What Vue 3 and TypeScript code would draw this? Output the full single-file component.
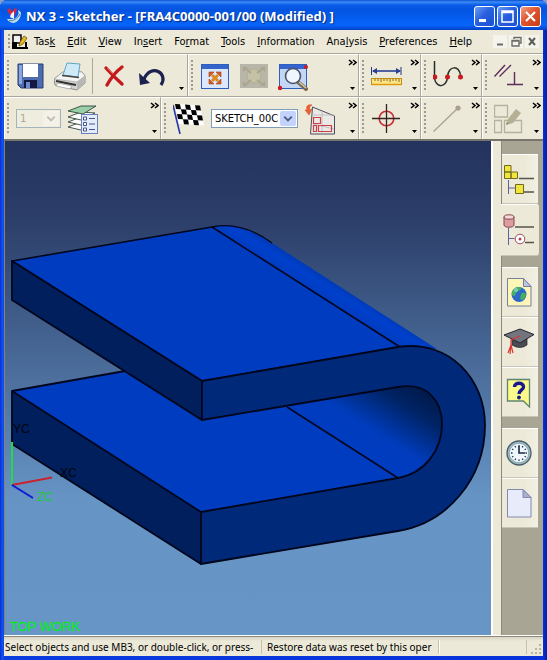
<script setup lang="ts">
import { ref } from 'vue'

interface MenuItem {
  before: string
  key: string
  after: string
}

const menus: MenuItem[] = [
  { before: 'Tas', key: 'k', after: '' },
  { before: '', key: 'E', after: 'dit' },
  { before: '', key: 'V', after: 'iew' },
  { before: 'In', key: 's', after: 'ert' },
  { before: 'Fo', key: 'r', after: 'mat' },
  { before: '', key: 'T', after: 'ools' },
  { before: '', key: 'I', after: 'nformation' },
  { before: 'Ana', key: 'l', after: 'ysis' },
  { before: '', key: 'P', after: 'references' },
  { before: '', key: 'H', after: 'elp' },
]

const layer = ref('1')
const sketch = ref('SKETCH_00C')

const checks: [number, number][] = []
for (let r = 0; r < 4; r++) {
  for (let c = 0; c < 5; c++) {
    if ((r + c) % 2 === 0) checks.push([c, r])
  }
}
const hours = Array.from({ length: 12 }, (_, i) => i * 30)
</script>

<template>
  <div class="window">
    <header class="titlebar">
      <svg class="app-icon" viewBox="0 0 16 16" aria-hidden="true">
        <path d="M1 11 Q3 15 8 15 Q14 13 15 6 Q15 3 12 2 Q14 8 8 11 Z" fill="#b9dcec" />
        <path d="M3 13 Q10 13 14 6" fill="none" stroke="#4a7f9f" stroke-width="1" />
        <path d="M1 2 L4 0 L6 4 L9 0 L11 1 L8 9 L4 7 Z" fill="#d7263d" />
        <path d="M5 6 L8 3 L8 11 L4 9 Z" fill="#f4f4f8" />
      </svg>
      <h1>NX 3 - Sketcher - [FRA4C0000-001/00 (Modified) ]</h1>
      <div class="captions">
        <button type="button" class="caption" aria-label="Minimize">
          <svg viewBox="0 0 19 19"><rect x="4" y="12" width="7" height="3" fill="#fff" /></svg>
        </button>
        <button type="button" class="caption" aria-label="Maximize">
          <svg viewBox="0 0 19 19"><path d="M4 4h11v11H4z M4 5.5h11" fill="none" stroke="#fff" stroke-width="1.5" /></svg>
        </button>
        <button type="button" class="caption close" aria-label="Close">
          <svg viewBox="0 0 19 19"><path d="M5 5l9 9M14 5l-9 9" stroke="#fff" stroke-width="2.2" /></svg>
        </button>
      </div>
    </header>

    <div class="client">
      <nav class="menubar">
        <span class="grip" />
        <svg class="doc-icon" viewBox="0 0 16 16" aria-hidden="true">
          <rect x="1" y="1" width="8" height="8" fill="#eee" stroke="#000" stroke-width="1.5" />
          <path d="M0 8h5v7H0z M5 13h11v2H5z M13 8h2v6h-2z" fill="#000" />
          <path d="M7 12 L8 8 L12 2 L15 4 L11 10 Z" fill="#e8b820" stroke="#5d4300" stroke-width=".7" />
        </svg>
        <ul>
          <li v-for="m in menus" :key="m.before + m.key + m.after">
            <button type="button">{{ m.before }}<u>{{ m.key }}</u>{{ m.after }}</button>
          </li>
        </ul>
        <div class="mdi">
          <button type="button" aria-label="Minimize document"><svg viewBox="0 0 14 13"><path d="M4 9.5h6" stroke="#6d6c66" stroke-width="2" /></svg></button>
          <button type="button" aria-label="Restore document"><svg viewBox="0 0 14 13"><path d="M5 4V2.5h7V8h-2M3 5.5h7V11H3z M3 6h7" fill="none" stroke="#6d6c66" stroke-width="1.4" /></svg></button>
          <button type="button" aria-label="Close document"><svg viewBox="0 0 14 13"><path d="M4 3l6 7M10 3l-6 7" stroke="#5d5c56" stroke-width="2" /></svg></button>
        </div>
      </nav>

      <div class="toolrow first">
        <section class="group">
          <span class="grip" />
          <button type="button" class="tool" aria-label="Save">
            <svg viewBox="0 0 32 32">
              <path d="M2 4h25v24H5l-3-3z" fill="#4c6cae" stroke="#2a3c74" />
              <path d="M3 5h3v19H3z" fill="#8aa6dc" />
              <rect x="7" y="4" width="15" height="13" fill="#fff" />
              <rect x="8" y="20" width="13" height="8" fill="#15183f" />
              <rect x="10" y="22" width="4" height="6" fill="#6f8cd0" />
            </svg>
          </button>
          <button type="button" class="tool" aria-label="Print">
            <svg viewBox="0 0 32 32">
              <path d="M0 19 L9 12 H28 L31 16 V23 L23 30 L1 25z" fill="#d4d4d0" stroke="#8a8a88" />
              <path d="M0 19 L9 12 H28 L31 16 L23 22z" fill="#f4f4f2" stroke="#999" stroke-width=".6" />
              <path d="M9 15 L13 3 L26 4 L24 17z" fill="#cfeaf6" stroke="#5fa6c6" />
              <path d="M8 15.5 L25 17.5" stroke="#444" stroke-width="1.5" />
              <path d="M2 21 L22 25" stroke="#333" stroke-width="2" />
              <path d="M4 23 L18 26 L16 29 L2 26z" fill="#fff" stroke="#888" stroke-width=".6" />
              <path d="M23 22 L31 16 V23 L23 30z" fill="#b8b8b6" />
            </svg>
          </button>
          <span class="divider" />
          <button type="button" class="tool" aria-label="Delete">
            <svg viewBox="0 0 32 32">
              <path d="M7 8 Q14 16 23 24 M23 7 Q14 14 8 25" fill="none" stroke="#c41a1e" stroke-width="3.4" stroke-linecap="round" />
              <path d="M8 8 L14 14" stroke="#e8605c" stroke-width="1" />
            </svg>
          </button>
          <button type="button" class="tool" aria-label="Undo">
            <svg viewBox="0 0 32 32">
              <path d="M24 25 C32 13 14 3 7 19" fill="none" stroke="#1d2150" stroke-width="3.2" />
              <path d="M2 13 L3 25 L13 23z" fill="#1d2150" />
            </svg>
          </button>
          <button type="button" class="more" aria-label="More standard tools"><svg viewBox="0 0 9 34"><path d="M2 28h5l-2.500 3z" fill="#000" /></svg></button>
        </section>

        <section class="group">
          <span class="grip" />
          <button type="button" class="tool" aria-label="Fit">
            <svg viewBox="0 0 32 32">
              <rect x="1.500" y="4.500" width="27" height="24" fill="#dbe7fa" stroke="#2d5fc0" />
              <rect x="2" y="5" width="26" height="4" fill="#3564cc" />
              <path d="M12 15l6 6M18 15l-6 6" stroke="#dc8a20" stroke-width="3" />
              <path d="M9 12h5l-5 5z M21 12v5l-5-5z M9 24v-5l5 5z M21 24h-5l5-5z" fill="#d85c22" stroke="#a53c10" stroke-width=".6" />
            </svg>
          </button>
          <button type="button" class="tool" disabled aria-label="Fit selection">
            <svg viewBox="0 0 32 32">
              <rect x="2" y="4" width="28" height="24" fill="#b8b6a8" />
              <path d="M5 7h5l-5 5z M27 7v5l-5-5z M5 26v-5l5 5z M27 26h-5l5-5z" fill="#aaa58c" />
              <circle cx="16" cy="16" r="7" fill="#c5c1a6" stroke="#b2ad96" />
              <path d="M8 9l5 4M24 9l-5 4M8 24l5-4M24 24l-5-4" stroke="#aca688" stroke-width="2" />
            </svg>
          </button>
          <button type="button" class="tool" aria-label="Zoom">
            <svg viewBox="0 0 32 32">
              <rect x="3.500" y="4.500" width="27" height="24" fill="#c3d6f6" stroke="#2d5fc0" />
              <rect x="4" y="5" width="26" height="4" fill="#3564cc" />
              <path d="M22 22 L30 29" stroke="#7a6a50" stroke-width="4" stroke-linecap="round" />
              <path d="M23 22 L30 28" stroke="#d8cba8" stroke-width="1.500" />
              <circle cx="17" cy="16" r="7.500" fill="#eef6ff" stroke="#4a5264" stroke-width="1.600" />
              <circle cx="30" cy="7" r="2" fill="#d01820" /><circle cx="4" cy="28" r="2.200" fill="#d01820" />
            </svg>
          </button>
          <button type="button" class="more" aria-label="More view tools"><svg viewBox="0 0 9 34"><path d="M1 1l3 2.500-3 2.500M5 1l3 2.500-3 2.500" class="chev" /><path d="M2 28h5l-2.500 3z" /></svg></button>
        </section>

        <section class="group">
          <span class="grip" />
          <button type="button" class="tool" aria-label="Measure">
            <svg viewBox="0 0 32 32">
              <path d="M.5 7v8M30 7v8" stroke="#27357c" />
              <path d="M2 11h27" stroke="#2c3f94" stroke-width="1.600" /><path d="M1 11l5-3v6zM30 11l-5-3v6z" fill="#2c3f94" />
              <rect x=".5" y="18.500" width="30" height="6" fill="#fbe48a" stroke="#c28c10" />
              <path d="M1 24.500h29" stroke="#e29c08" stroke-width="1.500" />
              <path d="M4 19v2M7 19v2M10 19v3M13 19v2M16 19v2M19 19v3M22 19v2M25 19v2M28 19v3" stroke="#8a661a" />
            </svg>
          </button>
          <button type="button" class="more" aria-label="More measure tools"><svg viewBox="0 0 9 34"><path d="M1 1l3 2.500-3 2.500M5 1l3 2.500-3 2.500" class="chev" /><path d="M2 28h5l-2.500 3z" /></svg></button>
        </section>

        <section class="group">
          <span class="grip" />
          <button type="button" class="tool" aria-label="Profile">
            <svg viewBox="0 0 32 32">
              <path d="M1.500 1 V17 C2 29 14 28 14.500 17 C15 5 27 5 27.500 16" fill="none" stroke="#26302a" stroke-width="1.500" />
              <circle cx="1.800" cy="17" r="2.500" fill="#c81c20" /><circle cx="14.500" cy="17" r="2.500" fill="#c81c20" /><circle cx="27.500" cy="17" r="2.500" fill="#c81c20" />
            </svg>
          </button>
          <button type="button" class="more" aria-label="More curve tools"><svg viewBox="0 0 9 34"><path d="M1 1l3 2.500-3 2.500M5 1l3 2.500-3 2.500" class="chev" /><path d="M2 28h5l-2.500 3z" /></svg></button>
        </section>

        <section class="group">
          <span class="grip" />
          <button type="button" class="tool" aria-label="Constraints">
            <svg viewBox="0 0 32 32">
              <path d="M.5 16.500 L11 5 M5.500 16.500 L17 5 M13 24.500H29 M20.500 12V24" fill="none" stroke="#5d2c5a" stroke-width="1.400" />
            </svg>
          </button>
          <button type="button" class="more" aria-label="More constraint tools"><svg viewBox="0 0 9 34"><path d="M1 1l3 2.500-3 2.500M5 1l3 2.500-3 2.500" class="chev" /><path d="M2 28h5l-2.500 3z" /></svg></button>
        </section>
      </div>

      <div class="toolrow second">
        <section class="group">
          <span class="grip" />
          <div class="combo small">
            <select v-model="layer" disabled aria-label="Work layer"><option>1</option></select>
            <svg viewBox="0 0 16 16" aria-hidden="true"><path d="M4 6l4 4 4-4" fill="none" stroke="#c0bdb0" stroke-width="2" /></svg>
          </div>
          <button type="button" class="tool" aria-label="Layer settings">
            <svg viewBox="0 0 32 32">
              <g stroke="#33443c" stroke-width=".9">
                <path d="M1 24 L14 19 L28 20 L14 27z" fill="#fff" />
                <path d="M1 19 L14 14 L28 15 L14 22z" fill="#fff" />
                <path d="M1 14 L14 9 L28 10 L14 17z" fill="#fff" />
                <path d="M1 8 L14 3 L29 3 L16 11z" fill="#9ad0a8" />
              </g>
              <rect x="14.500" y="11.500" width="16" height="19" fill="#e4ecfc" stroke="#6a80b8" />
              <path d="M16.500 14h3v3h-3zM16.500 19.500h3v3h-3zM16.500 25h3v3h-3z" fill="#fff" stroke="#44548c" />
              <path d="M22 15.500h6M22 21h6M22 26.500h6" stroke="#44548c" />
            </svg>
          </button>
          <button type="button" class="more" aria-label="More layer tools"><svg viewBox="0 0 9 34"><path d="M1 1l3 2.500-3 2.500M5 1l3 2.500-3 2.500" class="chev" /><path d="M2 28h5l-2.500 3z" /></svg></button>
        </section>

        <section class="group">
          <span class="grip" />
          <button type="button" class="tool" aria-label="Finish sketch">
            <svg viewBox="0 0 32 32">
              <path d="M0 2 L7 31" stroke="#2838a8" stroke-width="1.600" />
              <g transform="matrix(5 0.3 1 5 2 1)">
                <rect width="5" height="4" fill="#fff" />
                <rect v-for="([c, r], i) in checks" :key="i" :x="c" :y="r" width="1" height="1" fill="#000" />
              </g>
            </svg>
          </button>
          <div class="combo">
            <select v-model="sketch" aria-label="Sketch name"><option>SKETCH_00C</option></select>
            <svg class="live" viewBox="0 0 16 16" aria-hidden="true"><path d="M4 6l4 4 4-4" fill="none" stroke="#4d6185" stroke-width="2.200" /></svg>
          </div>
          <button type="button" class="tool" aria-label="Orient view to sketch">
            <svg viewBox="0 0 32 32">
              <path d="M8.500 4 L30.500 13 V31 H6.500z" fill="#ebe9e4" stroke="#4a4c5c" />
              <path d="M8 12h22M18 8v23M9 21 L30 26" stroke="#b8b4bc" stroke-width=".8" />
              <path d="M9.500 14.500h7v6h-7zM9.500 22.500h3v6h-3zM14.500 22.500h13v6h-13z" fill="none" stroke="#cc4048" stroke-width="1.200" />
              <path d="M8 2 C3 1 2 4 3 7 L1 7 L5 12 L8 6 L6 7 C5 4 6 3 8 2z" fill="#ee6030" stroke="#c84420" stroke-width=".5" />
            </svg>
          </button>
          <button type="button" class="more" aria-label="More sketcher tools"><svg viewBox="0 0 9 34"><path d="M1 1l3 2.500-3 2.500M5 1l3 2.500-3 2.500" class="chev" /><path d="M2 28h5l-2.500 3z" /></svg></button>
        </section>

        <section class="group">
          <span class="grip" />
          <button type="button" class="tool" aria-label="Point">
            <svg viewBox="0 0 32 32">
              <circle cx="15.500" cy="15.500" r="7.300" fill="none" stroke="#c83038" stroke-width="1.600" />
              <path d="M1 15.500h28M15.500 1v29" stroke="#33241f" stroke-width="1.300" />
            </svg>
          </button>
          <button type="button" class="more" aria-label="More point tools"><svg viewBox="0 0 9 34"><path d="M1 1l3 2.500-3 2.500M5 1l3 2.500-3 2.500" class="chev" /><path d="M2 28h5l-2.500 3z" /></svg></button>
        </section>

        <section class="group">
          <span class="grip" />
          <button type="button" class="tool" disabled aria-label="Edit curve">
            <svg viewBox="0 0 32 32"><path d="M.5 28.500 L25 5" stroke="#a9a394" stroke-width="1.300" /><circle cx="25" cy="5" r="2.600" fill="#a9a08e" /></svg>
          </button>
          <button type="button" class="more" aria-label="More edit tools"><svg viewBox="0 0 9 34"><path d="M1 1l3 2.500-3 2.500M5 1l3 2.500-3 2.500" class="chev" /><path d="M2 28h5l-2.500 3z" /></svg></button>
        </section>

        <section class="group">
          <span class="grip" />
          <button type="button" class="tool" disabled aria-label="Edit sketch">
            <svg viewBox="0 0 32 32">
              <path d="M.5 2.500h13v11.500H.5zM.5 17.500h7v12H.5zM10.500 17.500h17v12h-17z" fill="none" stroke="#b4b1a0" stroke-width="1.300" />
              <path d="M12 22 L14 16 L22 6 L27 10 L19 20z" fill="#b5af94" />
              <path d="M12 22l1-3 2 1.500z" fill="#8f8970" />
            </svg>
          </button>
          <button type="button" class="more" aria-label="More sketch tools"><svg viewBox="0 0 9 34"><path d="M1 1l3 2.500-3 2.500M5 1l3 2.500-3 2.500" class="chev" /><path d="M2 28h5l-2.500 3z" /></svg></button>
        </section>
      </div>

      <main class="work">
        <div class="viewport">
          <svg class="model" viewBox="5 141 486 494" preserveAspectRatio="xMinYMin meet" role="img" aria-label="Bent plate model">
            <defs>
              <linearGradient id="outerBend" gradientUnits="userSpaceOnUse" x1="306" y1="287" x2="316" y2="271">
                <stop offset="0" stop-color="#003cc0" /><stop offset=".6" stop-color="#0040cc" /><stop offset="1" stop-color="#003ab8" />
              </linearGradient>
              <linearGradient id="innerBend" gradientUnits="userSpaceOnUse" x1="343" y1="442" x2="390" y2="369">
                <stop offset="0" stop-color="#003cc0" /><stop offset=".3" stop-color="#003cbc" /><stop offset=".75" stop-color="#002364" /><stop offset="1" stop-color="#001a4c" />
              </linearGradient>
            </defs>
            <g stroke="#00061c" stroke-width="1.800" stroke-linejoin="round">
              <path d="M12 391 L125 371 L290 405 L398 478 L201 512z" fill="#003cc0" stroke="none" />
              <path d="M12 391 L125 371" />
              <path d="M12 391 L201 512 V564 L12 444z" fill="#001f5c" />
              <path d="M286 406 L398 386 Q440 384 443 425 Q440 472 398 478z" fill="url(#innerBend)" stroke="none" />
              <path d="M287 407 L398 478" fill="none" stroke-width="1.500" />
              <path d="M212 227 C236 222 257 232 272 243 L437 349 L398 347z" fill="url(#outerBend)" stroke="none" />
              <path d="M12 261 L212 227 L400 347 L202 381z" fill="#003cc0" stroke-width="1.600" />
              <path d="M212 227 C236 222 257 232 272 243" fill="none" stroke-width="1.300" />
              <path d="M12 261 L202 381 V420 L12 300z" fill="#001f5c" />
              <path d="M202 381 L398 347 C450 339 485 380 485 425 C485 479 447 523 398 531 L201 564 V512 L398 478 C425 473 442 450 442 424 C442 402 428 382 398 387 L202 420z" fill="#00297a" />
            </g>
            <g stroke-width="2" fill="none">
              <path d="M12 442V485" stroke="#28d848" /><path d="M12 485L52 477.500" stroke="#c82430" /><path d="M12 485L33 498" stroke="#1018d8" />
            </g>
            <g class="axis">
              <text x="13" y="433" fill="#02040e">YC</text>
              <text x="60" y="477" fill="#02040e">XC</text>
              <text x="37" y="501" fill="#20c83c">ZC</text>
              <text x="10" y="631" class="view-name">TOP WORK</text>
            </g>
          </svg>
        </div>

        <aside class="rail" aria-label="Resource bar">
          <div class="tabs">
            <button type="button" aria-label="Assembly navigator">
              <svg viewBox="0 0 32 40">
                <path d="M1.500 6.500h6.500v6.500H1.500zM1.500 13h6.500v6.500H1.500zM8 13h6.500v6.500H8zM12.500 25.500h8v9h-8z" fill="#f2e63c" stroke="#6f6a20" />
                <path d="M16 19.500h15M21 33h10" stroke="#55564e" stroke-width="1.400" /><path d="M5.500 21v14M5.500 29h7" stroke="#5b62a0" fill="none" />
              </svg>
            </button>
            <button type="button" class="active" aria-label="Part navigator">
              <svg viewBox="0 0 32 40">
                <path d="M1 7v8c0 3 10 3 10 0V7z" fill="#dc9ca0" stroke="#84444c" /><ellipse cx="6" cy="7" rx="5" ry="2.200" fill="#f6d8d8" stroke="#84444c" />
                <path d="M12 17h19M22 32.500h9" stroke="#55564e" stroke-width="1.400" /><path d="M5.500 18v17M5.500 28.500h6" stroke="#5b62a0" fill="none" />
                <circle cx="17" cy="29" r="4.800" fill="#fff" stroke="#985058" /><circle cx="17" cy="29" r="1.500" fill="#b04048" />
              </svg>
            </button>
          </div>
          <div class="tabs">
            <button type="button" aria-label="Internet explorer">
              <svg viewBox="0 0 32 40">
                <path d="M4.500 6.500h16l7.500 8v19.500H4.500z" fill="#fdf6b8" stroke="#7780a0" /><path d="M20.500 6.500v8H28z" fill="#b8c6e0" stroke="#7780a0" />
                <circle cx="16" cy="22.500" r="7.500" fill="#2c68c8" /><path d="M10 18c3-4 7-3 8-2s-2 3-4 4-1 4-3 4-3-3-1-6zM19 21c3-1 4 0 4 3-1 3-4 4-5 4s-1-5 1-7z" fill="#48b060" /><circle cx="13" cy="18" r="2" fill="#a8dcf4" opacity=".6" />
              </svg>
            </button>
            <button type="button" aria-label="Training">
              <svg viewBox="0 0 32 40">
                <path d="M9 16v7q8 5 15 0v-8z" fill="#4a4a54" stroke="#222" stroke-width=".7" />
                <path d="M1 13 L17 7 L31 12.500 L17 21z" fill="#74747e" stroke="#24242c" /><path d="M17 14 L8 18 V25" fill="none" stroke="#d83830" stroke-width="1.200" />
                <path d="M8 23l-3 8M8 23l-1 9M8 23l2 8" stroke="#dc3830" stroke-width="1.200" />
              </svg>
            </button>
            <button type="button" aria-label="Help">
              <svg viewBox="0 0 32 40">
                <path d="M4.500 7.500h22v21.500l0 6-6-6h-16z" fill="#fbf98c" stroke="#5f8470" stroke-width="1.300" />
                <path d="M11.500 15c0-5 9-5 9 0 0 3-4.500 3-4.500 7" fill="none" stroke="#18188c" stroke-width="3.400" /><circle cx="16" cy="25.500" r="1.900" fill="#18188c" />
              </svg>
            </button>
          </div>
          <div class="tabs">
            <button type="button" aria-label="History">
              <svg viewBox="0 0 32 40">
                <circle cx="16" cy="20" r="12" fill="#9dbac2" stroke="#4a5f68" stroke-width="1.300" /><circle cx="16" cy="20" r="9.700" fill="#f0f8fc" stroke="#7b969e" stroke-width=".7" />
                <path v-for="h in hours" :key="h" d="M16 12v1.500" stroke="#1c2c54" stroke-width="1.300" :transform="`rotate(${h} 16 20)`" />
                <path d="M16 13v7h6" fill="none" stroke="#182848" stroke-width="1.600" />
              </svg>
            </button>
            <button type="button" aria-label="Roles">
              <svg viewBox="0 0 32 40">
                <path d="M4.500 6.500h15.500l8 8V34H4.500z" fill="#e8ebfa" stroke="#8288b0" /><path d="M20 6.500l0 8h8z" fill="#a8b0cc" stroke="#8288b0" />
              </svg>
            </button>
          </div>
        </aside>
      </main>

      <footer class="status">
        <p>Select objects and use MB3, or double-click, or press-</p>
        <p>Restore data was reset by this oper</p>
        <span class="pane" />
        <svg class="sizer" viewBox="0 0 12 12" aria-hidden="true"><path d="M9 1h2v2H9zM5 5h2v2H5zM9 5h2v2H9zM1 9h2v2H1zM5 9h2v2H5zM9 9h2v2H9z" fill="#b8b4a2" /></svg>
      </footer>
    </div>
  </div>
</template>

<style>
body {
  margin: 0;
  background: #8aa0cc;
}
</style>

<style scoped>
.window {
  box-sizing: border-box;
  min-height: 100vh;
  display: flex;
  flex-direction: column;
  padding: 0 4px 4px;
  background: linear-gradient(90deg, #0830d8, #1658f0 3px, #0a3ce0 4px, #0831d9 calc(100% - 4px), #0020a8);
  border-radius: 7px 7px 0 0;
  font: 11px/14px "DejaVu Sans Condensed", "Liberation Sans", sans-serif;
  color: #000;
  overflow: hidden;
}
button {
  font: inherit;
  color: inherit;
  border: 0;
  padding: 0;
  background: none;
}
svg {
  display: block;
}
.titlebar {
  box-sizing: border-box;
  height: 30px;
  margin: 0 -4px;
  padding: 2px 6px 0;
  display: flex;
  align-items: center;
  gap: 4px;
  background: linear-gradient(#0a50d0 0, #3c8cf8 2px, #0a5ce8 5px, #0454e0 10px, #0560f4 21px, #0664fc 25px, #0448d0 29px, #0340c0 30px);
}
.app-icon {
  width: 16px;
  height: 16px;
}
h1 {
  flex: 1;
  margin: 0;
  min-width: 0;
  overflow: hidden;
  white-space: nowrap;
  font: bold 13px/20px "Noto Sans", "Open Sans", sans-serif;
  color: #fff;
  text-shadow: 1px 1px 1px #0b2a80;
}
.captions {
  display: flex;
  gap: 2px;
}
.caption {
  box-sizing: border-box;
  width: 21px;
  height: 21px;
  border: 1px solid #fff;
  border-radius: 3px;
  background: linear-gradient(135deg, #6c9cf4, #2860e0 45%, #1c50d0);
}
.caption.close {
  background: linear-gradient(135deg, #f0a088, #e05430 45%, #c83c18);
}
.client {
  flex: 1;
  display: flex;
  flex-direction: column;
  background: #ece9d8;
}
.menubar {
  box-sizing: border-box;
  height: 24px;
  display: flex;
  align-items: center;
  padding: 0 4px;
  border-bottom: 1px solid #aca899;
}
.grip {
  flex: none;
  width: 3px;
  height: 32px;
  background: radial-gradient(circle at 1px 1px, #9d9a8c 1px, transparent 1px) 0 0 / 3px 4px;
}
.menubar .grip {
  height: 16px;
}
.doc-icon {
  width: 16px;
  height: 16px;
  margin: 0 6px 0 1px;
}
.menubar ul {
  flex: 1;
  display: flex;
  gap: 12px;
  margin: 0;
  padding: 0;
  list-style: none;
}
.menubar li {
  display: flex;
}
.mdi {
  display: flex;
  gap: 2px;
}
.mdi button {
  width: 14px;
  height: 13px;
  background: #f4f3ec;
}
.toolrow {
  display: grid;
  height: 42px;
  border-bottom: 1px solid #aca899;
}
.first {
  grid-template-columns: 184px 171px 62px 61px 1fr;
}
.second {
  grid-template-columns: 157px 198px 62px 61px 1fr;
  border-bottom: 2px solid #77756c;
}
.group {
  display: flex;
  align-items: center;
  gap: 6px;
  padding: 0 1px 0 3px;
  border-right: 1px solid #aca899;
  border-top: 1px solid #fff;
  box-shadow: inset 1px 0 #fff;
  min-width: 0;
}
.group:last-child {
  border-right: 0;
  padding-right: 5px;
}
.tool {
  flex: none;
}
.tool svg {
  width: 32px;
  height: 32px;
}
.divider {
  width: 1px;
  height: 36px;
  background: #aca899;
}
.more {
  flex: none;
  margin-left: auto;
}
.more svg {
  width: 9px;
  height: 34px;
}
.chev {
  fill: none;
  stroke: #000;
  stroke-width: 1.5;
}
.combo {
  flex: none;
  display: grid;
  grid-template-columns: 1fr 16px;
  align-items: center;
  box-sizing: border-box;
  width: 87px;
  height: 19px;
  padding: 0 1px 0 0;
  border: 1px solid #7f9db9;
  background: #fff;
}
.combo.small {
  width: 45px;
  background: #efedde;
  border-color: #a5b4bc;
}
.combo select {
  grid-area: 1 / 1 / 2 / 3;
  width: 100%;
  height: 17px;
  padding: 0 17px 0 3px;
  border: 0;
  appearance: none;
  background: none;
  font: inherit;
  color: #000;
}
.combo select:disabled {
  color: #aca899;
  opacity: 1;
}
.combo svg {
  grid-area: 1 / 2;
  width: 16px;
  height: 15px;
  background: #f4f2e8;
  pointer-events: none;
}
.combo svg.live {
  background: #c3d3fb;
  border-radius: 2px;
}
.work {
  flex: 1;
  display: flex;
  border-bottom: 1px solid #fff;
}
.viewport {
  flex: 1;
  min-width: 0;
  border-left: 1px solid #85827a;
  border-right: 2px solid #fff;
  background: linear-gradient(#23335d 0, #2b3d68 15%, #6695c5 73%, #6796c6 100%);
}
.model {
  width: 100%;
  height: auto;
}
.axis {
  font: 12px "Liberation Sans", sans-serif;
}
.view-name {
  font-size: 13px;
  fill: #08e828;
  stroke: #08e828;
  stroke-width: 0.3;
}
.rail {
  flex: none;
  display: flex;
  flex-direction: column;
  gap: 11px;
  box-sizing: border-box;
  width: 50px;
  padding: 13px 5px 0 0;
  background: linear-gradient(90deg, #ece9d8 8px, #8c897b 8px, #8c897b 9px, #a9a595 9px);
}
.tabs {
  display: flex;
  flex-direction: column;
  padding-left: 9px;
}
.tabs button {
  box-sizing: border-box;
  display: flex;
  height: 50px;
  padding: 4px 1px;
  background: linear-gradient(90deg, #ece9d8 60%, #f2f0e4);
  border-top: 1px solid #fff;
  border-bottom: 1px solid #c9c5b4;
}
.tabs svg {
  flex: none;
  width: 32px;
  height: 40px;
}
.tabs .active {
  height: 52px;
  margin: 0 -1px;
  padding: 5px 2px;
  background: #ece9d8;
  border-radius: 0 3px 3px 0;
}
.status {
  box-sizing: border-box;
  height: 20px;
  display: grid;
  grid-template-columns: 258px 177px 1fr 16px;
  align-items: center;
  border-top: 1px solid #8c897b;
  background: linear-gradient(#d8d4c4, #ece9d8 4px);
  font: 10px/14px "Noto Sans", "Open Sans", sans-serif;
}
.status p {
  margin: 0;
  padding-left: 1px;
  overflow: hidden;
  white-space: nowrap;
  border-right: 1px solid #c5c2b0;
}
.status p + p {
  padding-left: 5px;
}
.pane {
  height: 14px;
  border-right: 1px solid #c5c2b0;
  border-left: 1px solid #fff;
}
.sizer {
  width: 12px;
  height: 12px;
  margin: 4px 0 0 3px;
}
</style>
